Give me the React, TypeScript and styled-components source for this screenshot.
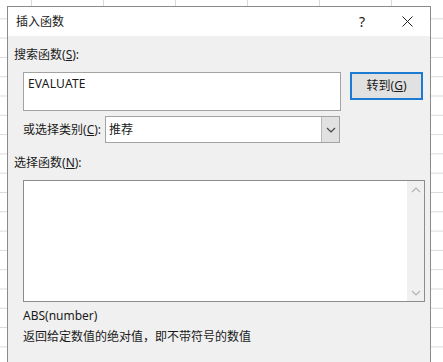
import React from 'react'
import styled, { createGlobalStyle } from 'styled-components'

const GlobalStyle = createGlobalStyle`
  html, body {
    margin: 0;
    padding: 0;
    height: 100%;
    overflow: hidden;
  }
  body {
    background-color: #ffffff;
    background-image:
      linear-gradient(to right, transparent 30px, #dadada 30px, #dadada 31px, transparent 31px),
      linear-gradient(to bottom, transparent 18.3px, #dadada 18.3px, #dadada 19.3px, transparent 19.3px);
    background-size: 72px 100%, 100% 19.3px;
    background-position: 1px 0, 0 0;
    font-family: 'Noto Sans', 'Noto Sans CJK SC', sans-serif;
    color: #1a1a1a;
  }
`

const Chevron = ({ dir, color }: { dir: 'up' | 'down'; color: string }) => (
  <svg width='10' height='6' viewBox='0 0 10 6'>
    <path
      d={dir === 'down' ? 'M1 1 L5 5 L9 1' : 'M1 5 L5 1 L9 5'}
      fill='none'
      stroke={color}
      strokeWidth='1.2'
    />
  </svg>
)

const Key = ({ k }: { k: string }) => (
  <>
    (<u>{k}</u>)
  </>
)

const App = () => {
  return (
    <>
      <GlobalStyle />
      <Dialog>
        <TitleBar>
          <Title>插入函数</Title>
          <HelpButton>?</HelpButton>
          <CloseButton>
            <svg width='11' height='11' viewBox='0 0 11 11'>
              <path d='M0.5 0.5 L10.5 10.5 M10.5 0.5 L0.5 10.5' stroke='#222' strokeWidth='1' />
            </svg>
          </CloseButton>
        </TitleBar>
        <Body>
          <Label>
            搜索函数<Key k='S' />:
          </Label>
          <SearchRow>
            <SearchBox>EVALUATE</SearchBox>
            <GoButton>
              转到<Key k='G' />
            </GoButton>
          </SearchRow>
          <CategoryRow>
            <CategoryLabel>
              或选择类别<Key k='C' />:
            </CategoryLabel>
            <Select>
              <SelectValue>推荐</SelectValue>
              <SelectArrow>
                <Chevron dir='down' color='#444' />
              </SelectArrow>
            </Select>
          </CategoryRow>
          <Label $top={12}>
            选择函数<Key k='N' />:
          </Label>
          <ListBox>
            <ListArea />
            <ScrollBar>
              <Chevron dir='up' color='#b4b4b4' />
              <Chevron dir='down' color='#b4b4b4' />
            </ScrollBar>
          </ListBox>
          <Info $top={6}>ABS(number)</Info>
          <Info $top={5}>返回给定数值的绝对值，即不带符号的数值</Info>
        </Body>
      </Dialog>
    </>
  )
}

const Dialog = styled.div`
  margin: 6px 0 0 7px;
  width: 424px;
  height: 356px;
  box-sizing: border-box;
  border: 1px solid #8a8a8a;
  border-bottom: 0;
  display: flex;
  flex-direction: column;
  font-size: 12px;
`

const TitleBar = styled.div`
  height: 29px;
  background: #ffffff;
  display: flex;
  align-items: center;
  padding-left: 8px;
`

const Title = styled.div`
  flex: 1;
  font-size: 12px;
  line-height: 16px;
`

const HelpButton = styled.div`
  width: 12px;
  font-size: 14px;
  line-height: 16px;
  margin-right: 31px;
`

const CloseButton = styled.div`
  width: 11px;
  height: 11px;
  margin-right: 17px;
  display: flex;
`

const Body = styled.div`
  flex: 1;
  background: #f0f0f0;
  padding: 11px 0 0 6px;
  display: flex;
  flex-direction: column;
`

const Label = styled.div<{ $top?: number }>`
  line-height: 16px;
  margin-top: ${(p) => p.$top ?? 0}px;
  white-space: nowrap;
`

const SearchRow = styled.div`
  display: flex;
  align-items: flex-start;
  gap: 9px;
  margin-top: 9px;
  padding-left: 9px;
`

const SearchBox = styled.div`
  width: 318px;
  height: 39px;
  box-sizing: border-box;
  background: #ffffff;
  border: 1px solid #a3a3a3;
  padding: 3px 0 0 4px;
  line-height: 16px;
  letter-spacing: 0.2px;
`

const GoButton = styled.div`
  width: 73px;
  height: 28px;
  box-sizing: border-box;
  background: #e1e1e1;
  border: 2px solid #1a7ad4;
  display: flex;
  align-items: center;
  justify-content: center;
  line-height: 16px;
`

const CategoryRow = styled.div`
  display: flex;
  align-items: center;
  margin-top: 5px;
  padding-left: 9px;
`

const CategoryLabel = styled.div`
  width: 82px;
  line-height: 16px;
  white-space: nowrap;
`

const Select = styled.div`
  width: 235px;
  height: 27px;
  box-sizing: border-box;
  background: #ffffff;
  border: 1px solid #a3a3a3;
  display: flex;
`

const SelectValue = styled.div`
  flex: 1;
  padding-left: 3px;
  line-height: 25px;
`

const SelectArrow = styled.div`
  width: 17px;
  background: #e1e1e1;
  border-left: 1px solid #b9b9b9;
  display: flex;
  align-items: center;
  justify-content: center;
`

const ListBox = styled.div`
  margin: 9px 0 0 9px;
  width: 402px;
  height: 122px;
  box-sizing: border-box;
  background: #ffffff;
  border: 1px solid #8c8c8c;
  display: flex;
`

const ListArea = styled.div`
  flex: 1;
`

const ScrollBar = styled.div`
  width: 17px;
  background: #f0f0f0;
  display: flex;
  flex-direction: column;
  justify-content: space-between;
  align-items: center;
  padding: 6px 0 5px;
`

const Info = styled.div<{ $top: number }>`
  margin-top: ${(p) => p.$top}px;
  padding-left: 9px;
  line-height: 16px;
  white-space: nowrap;
`

export default App
